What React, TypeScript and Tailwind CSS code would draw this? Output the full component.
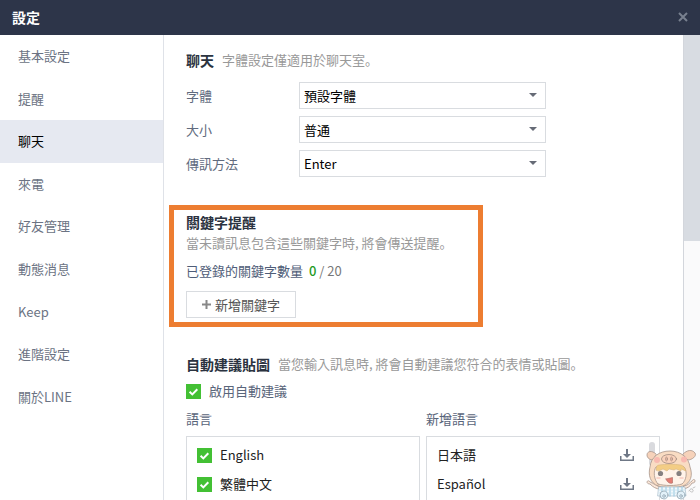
import type { ReactNode } from "react";

const navItems = [
  "基本設定",
  "提醒",
  "聊天",
  "來電",
  "好友管理",
  "動態消息",
  "Keep",
  "進階設定",
  "關於LINE",
];

const chatOptions = [
  { id: "font", label: "字體", value: "預設字體" },
  { id: "size", label: "大小", value: "普通" },
  { id: "send", label: "傳訊方法", value: "Enter" },
];

function SelectRow({ id, label, value }: { id: string; label: string; value: string }) {
  return (
    <div className="flex items-center">
      <label htmlFor={id} className="w-[113px] shrink-0 text-[#616b7e]">
        {label}
      </label>
      <div className="relative w-[247px]">
        <select
          id={id}
          className="block h-[27px] w-full appearance-none border border-[#d9dce0] bg-white px-1 text-black"
        >
          <option>{value}</option>
        </select>
        <svg
          viewBox="0 0 8 4"
          className="pointer-events-none absolute top-[11px] right-[9px] h-1 w-2 fill-[#666b76]"
        >
          <path d="M0 0h8L4 4z" />
        </svg>
      </div>
    </div>
  );
}

function CheckBox({ label, className }: { label: string; className: string }) {
  return (
    <label className={`flex items-center gap-2 ${className}`}>
      <span className="relative block size-[15px]">
        <input
          type="checkbox"
          defaultChecked
          className="block size-[15px] appearance-none bg-[#43c034]"
        />
        <svg
          viewBox="0 0 15 15"
          className="pointer-events-none absolute inset-0 fill-none stroke-white stroke-2"
        >
          <path d="M3.6 7.8l2.7 2.6 5-5.2" />
        </svg>
      </span>
      {label}
    </label>
  );
}

function Section({ title, hint, children }: { title: string; hint: string; children: ReactNode }) {
  return (
    <section>
      <div className="flex items-center gap-2">
        <h2 className="text-sm leading-5 font-bold text-[#2b3340]">{title}</h2>
        <p className="text-[#999]">{hint}</p>
      </div>
      {children}
    </section>
  );
}

function DownloadIcon() {
  return (
    <svg viewBox="0 0 14 12" className="h-3 w-3.5 fill-[#6f7886]">
      <path d="M6 0h2v5h3L7 9 3 5h3zM0 7h1.5v3.5h11V7H14v5H0z" />
    </svg>
  );
}

// Little character in a piglet hood
function Mascot() {
  return (
    <svg
      viewBox="0 0 54 52"
      className="pointer-events-none absolute right-0 bottom-0 h-[52px] w-[54px]"
      strokeWidth=".8"
      strokeLinecap="round"
      strokeLinejoin="round"
    >
      <g stroke="#a8958c">
        <path d="M14 38C10 38 7 35 4 34c-1-2-3-1-3 0s1 2 3 2c3 3 6 5 10 5z" fill="#fce8da" />
        <path d="M38 38c4 0 6-4 8-5 1-2 3-2 3 0s-2 2-3 2c-2 4-5 5-8 6z" fill="#fce8da" />
        <path d="M10 6C6 2 1 3 1 7c0 3 3 5 6 5zM37 6c4-4 9-5 12-1 2 3-3 7-7 7z" fill="#f6d2ba" />
        <path d="M12 38C4 35 2 27 4 19 5 9 13 3 24 3s19 7 20 16c3 8 1 16-7 19-7 2-18 2-25 0z" fill="#f9dcc3" />
        <path d="M12 36C8 32 7 23 10 19c9-2 19-2 28 0 4 5 2 14-2 17-6 2-18 2-24 0z" fill="#fff3e9" />
      </g>
      <path d="M10 22c0-3 1-5 3-5 7-1 15-1 22 0 3 1 4 3 5 6l-5-2v2l-5-2-2 1-5-1-2 2-4-2-4 2z" fill="#f3cd85" stroke="#d2ae76" strokeWidth=".5" />
      <ellipse cx="23" cy="11" rx="7.5" ry="4.500" fill="#fad2bb" stroke="#a18b80" />
      <ellipse cx="20.5" cy="11" rx="1" ry="2" fill="#e5b7a4" stroke="#a18b80" strokeWidth=".6" />
      <ellipse cx="25.5" cy="11" rx="1" ry="2" fill="#e5b7a4" stroke="#a18b80" strokeWidth=".6" />
      <circle cx="11" cy="12" r="3" fill="#f8b9b0" />
      <circle cx="38" cy="11.5" r="3" fill="#f8b9b0" />
      <circle cx="14.5" cy="25.5" r="2.6" fill="#858080" />
      <circle cx="33" cy="25.500" r="2.6" fill="#858080" />
      <path d="M11 30h3M34 30h3" stroke="#f8cbc0" strokeWidth="1.5" />
      <path d="M20 31l6.500-1.500V35c-2 1-5 0-6.500-4z" fill="#e37b72" stroke="#aa6962" strokeWidth=".6" />
      <path d="M13 39h26l1 9H12z" fill="#f1f8fc" stroke="#9ab3c3" strokeWidth=".6" />
      <path d="M16 39v9M20 39v9M24 39v9M28 39v9M32 39v9M36 39v9" stroke="#a9d1e5" strokeWidth="1.3" />
      <path d="M13 42h26M13 45h26" stroke="#c5e0ee" />
      <g fill="#e2f1f9" stroke="#93a6b2">
        <ellipse cx="18" cy="47" rx="4" ry="4" />
        <ellipse cx="35" cy="47" rx="4" ry="4" />
        <circle cx="18" cy="48" r="1.3" />
        <circle cx="35" cy="48" r="1.3" />
      </g>
      <path d="M43 43q2-4 4-1c1 2-2 3-3 1m3-3l2-1" fill="none" stroke="#b5b5b5" />
    </svg>
  );
}

export default function App() {
  return (
    <div className="relative flex h-screen flex-col overflow-hidden bg-white font-['Noto_Sans_CJK_JP','Noto_Sans_CJK_TC',sans-serif] text-[13px] leading-[18px]">
      <header className="flex h-[35px] shrink-0 items-center justify-between bg-[#2d3549] px-3 pb-0.5 text-white">
        <h1 className="text-sm leading-5 font-bold">設定</h1>
        <button aria-label="Close">
          <svg viewBox="0 0 10 10" className="size-2.5 stroke-[#78808f] stroke-2">
            <path d="M1 1l8 8M9 1L1 9" />
          </svg>
        </button>
      </header>

      <div className="flex min-h-0 flex-1">
        <aside className="w-[164px] shrink-0 border-r border-[#dfe2e8]">
          <nav className="grid h-[383px] auto-rows-fr">
            {navItems.map((item) => (
              <a
                key={item}
                href="#"
                className={`flex items-center pl-[18px] ${
                  item === "聊天" ? "bg-[#e6e9f1] text-black" : "text-[#6b7383]"
                }`}
              >
                {item}
              </a>
            ))}
          </nav>
        </aside>

        <main className="min-w-0 flex-1 overflow-hidden pt-[15px] pl-[22px]">
          <Section title="聊天" hint="字體設定僅適用於聊天室。">
            <div className="mt-3 flex flex-col gap-[7px]">
              {chatOptions.map((option) => (
                <SelectRow key={option.id} {...option} />
              ))}
            </div>
          </Section>

          {/* Highlighted keyword block */}
          <section className="mt-7 -ml-[17px] w-[314px] border-[5px] border-[#ed7d31] pt-0.5 pb-1 pl-3">
            <h2 className="text-sm leading-5 font-bold text-[#2b3340]">關鍵字提醒</h2>
            <p className="mt-0.5 text-[#999]">當未讀訊息包含這些關鍵字時, 將會傳送提醒。</p>
            <p className="mt-[10px] flex gap-1.5 text-[#4f5d78]">
              已登錄的關鍵字數量
              <span className="text-[#777]">
                <b className="font-medium text-[#1e9a1e]">0</b> / 20
              </span>
            </p>
            <button className="mt-[11px] flex h-[27px] items-center gap-1 border border-[#d9dce0] px-[15px] text-[#555]">
              <svg viewBox="0 0 9 9" className="size-[9px] stroke-[#888] stroke-2">
                <path d="M4.500 0v9M0 4.500h9" />
              </svg>
              新增關鍵字
            </button>
          </section>

          <div className="mt-[27px]">
            <Section title="自動建議貼圖" hint="當您輸入訊息時, 將會自動建議您符合的表情或貼圖。">
              <CheckBox label="啟用自動建議" className="mt-2 text-[#59657a]" />
              <div className="mt-[10px] grid w-[474px] grid-cols-2 gap-x-1.5 text-[#59657a]">
                <h3>語言</h3>
                <h3>新增語言</h3>
                <ul className="mt-2 flex h-40 flex-col gap-[11px] border border-[#d9dce0] pt-[9px] pl-[10px] text-[#222]">
                  <li>
                    <CheckBox label="English" className="" />
                  </li>
                  <li>
                    <CheckBox label="繁體中文" className="" />
                  </li>
                </ul>
                <ul className="relative mt-2 flex h-40 flex-col gap-[11px] border border-[#d9dce0] pt-[9px] pr-[25px] pl-[10px] text-[#222]">
                  {["日本語", "Español"].map((lang) => (
                    <li key={lang} className="flex items-center justify-between">
                      {lang}
                      <button aria-label={lang}>
                        <DownloadIcon />
                      </button>
                    </li>
                  ))}
                  <li aria-hidden className="absolute top-[5px] right-1 h-6 w-[6px] rounded-full bg-[#d9dade]" />
                </ul>
              </div>
            </Section>
          </div>
        </main>

        {/* Scroll track */}
        <div className="w-[17px] shrink-0 border-l border-[#d3d6dc] bg-[#fafafb]">
          <div className="h-[206px] bg-[#d8dce2]" />
        </div>
      </div>

      <Mascot />
    </div>
  );
}
